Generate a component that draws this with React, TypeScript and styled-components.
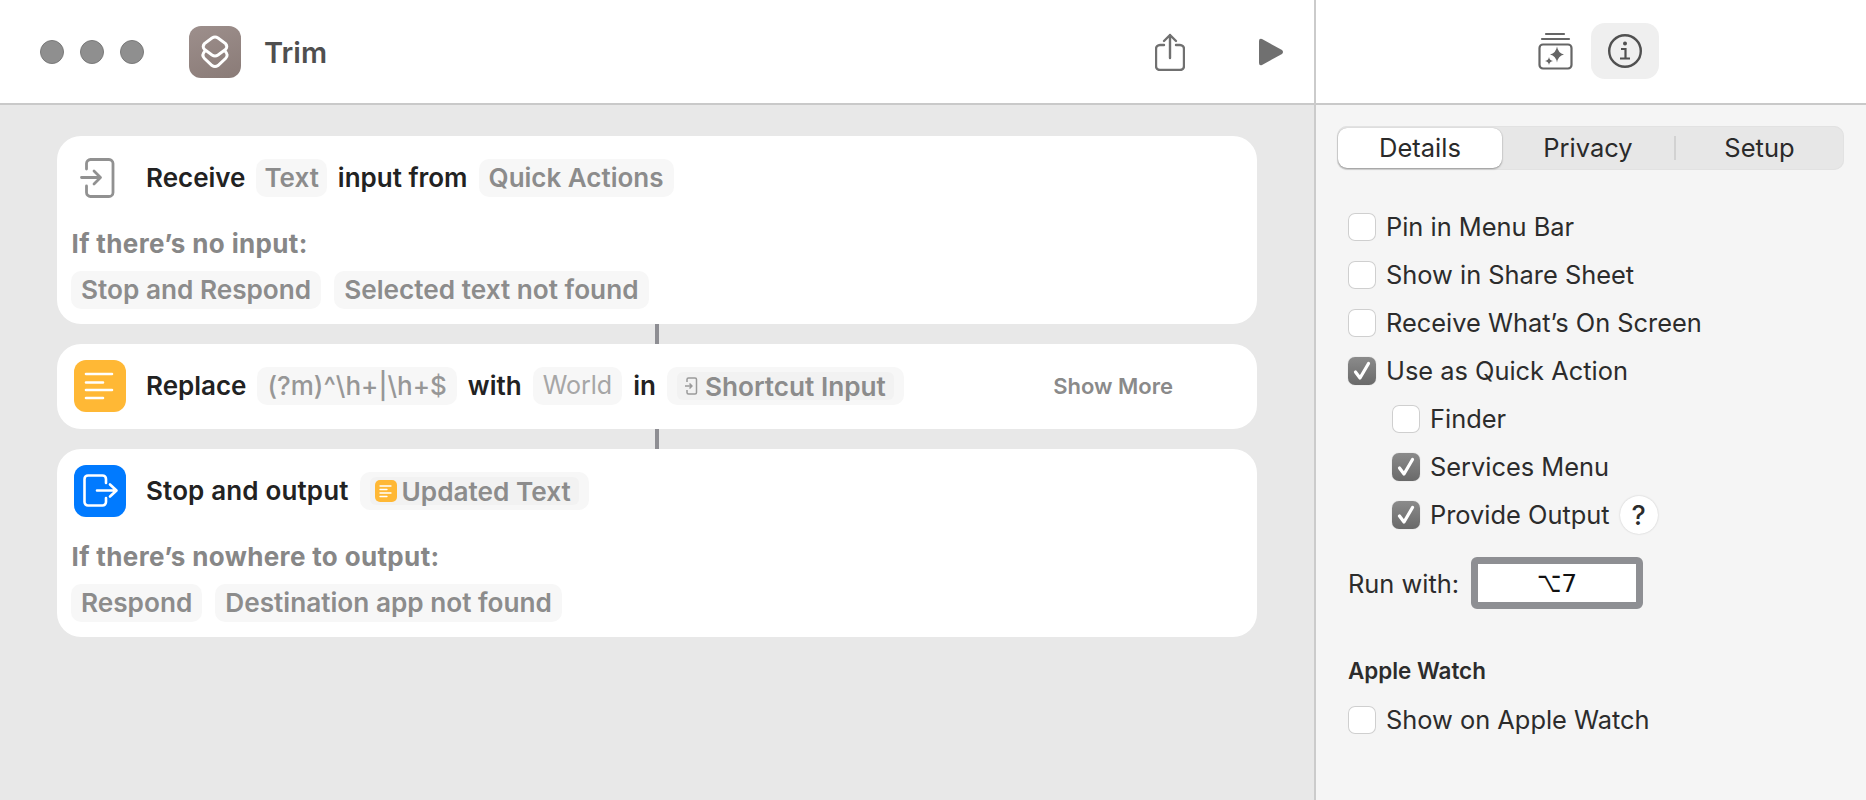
import React from 'react'
import styled, { createGlobalStyle } from 'styled-components'

const GlobalStyle = createGlobalStyle`
  html, body {
    margin: 0;
    padding: 0;
    background: #f5f5f5;
  }
  * {
    box-sizing: border-box;
  }
`

const Window = styled.div`
  display: flex;
  width: 1866px;
  height: 800px;
  overflow: hidden;
  font-family: Inter, 'Liberation Sans', sans-serif;
`

const Editor = styled.div`
  display: flex;
  flex-direction: column;
  width: 1316px;
  flex: none;
  background: #e8e8e8;
  border-right: 2px solid #cbcbcb;
`

const Sidebar = styled.div`
  display: flex;
  flex-direction: column;
  flex: 1;
  background: #f5f5f5;
`

const Toolbar = styled.header`
  display: flex;
  align-items: center;
  height: 105px;
  flex: none;
  background: #fff;
  border-bottom: 2px solid #c9c9c9;
`

const EditorToolbar = styled(Toolbar)`
  padding-left: 40px;
  padding-right: 30px;
`

const SidebarToolbar = styled(Toolbar)`
  justify-content: flex-start;
  padding-left: 222px;
  padding-bottom: 2px;
`

const Lights = styled.div`
  display: flex;
  gap: 16px;
  margin-right: 45px;
`

const Light = styled.span`
  width: 24px;
  height: 24px;
  border-radius: 50%;
  background: #8f8f8f;
  border: 1px solid #7a7a7a;
`

const AppIcon = styled.div`
  display: flex;
  width: 52px;
  height: 52px;
  border-radius: 12px;
  background: linear-gradient(160deg, #9d8f8c, #8a7b77);
`

const Title = styled.h1`
  margin: 2px 0 0 23px;
  font-size: 29px;
  font-weight: 600;
  color: #4f4f4f;
`

const ToolbarActions = styled.div`
  display: flex;
  align-items: center;
  gap: 73px;
  margin-left: auto;
`

const ToolIcon = styled.svg`
  display: block;
  flex: none;
`

const InfoButton = styled.div`
  display: flex;
  align-items: center;
  justify-content: center;
  width: 68px;
  height: 56px;
  margin-left: 17px;
  border-radius: 14px;
  background: #efefef;
`

const Flow = styled.main`
  display: flex;
  flex-direction: column;
  padding: 31px 0 0 57px;
`

const Card = styled.section<{ $compact?: boolean }>`
  width: 1200px;
  padding: 16px 0 ${(p) => (p.$compact ? '17px' : '15px')};
  background: #fff;
  border-radius: 24px;
`

const Connector = styled.div<{ $height: number }>`
  width: 4px;
  height: ${(p) => p.$height}px;
  margin-left: 598px;
  background: #8e8e93;
`

const ActionRow = styled.div`
  display: flex;
  align-items: center;
  gap: 11px;
  height: 52px;
  padding-left: 17px;
`

const IconSlot = styled.div`
  width: 52px;
  flex: none;
  margin-right: 9px;
  padding-left: 6px;
`

const ActionIcon = styled.div<{ $color: string }>`
  width: 52px;
  height: 52px;
  flex: none;
  margin-right: 9px;
  border-radius: 12px;
  background: ${(p) => p.$color};
`

const Word = styled.span<{ $wide?: boolean }>`
  padding-bottom: 2px;
  font-size: 26px;
  font-weight: 600;
  letter-spacing: ${(p) => (p.$wide ? '0.15px' : '0')};
  color: #222;
  white-space: nowrap;
`

const Chip = styled.span<{ $tone?: 'value' | 'regex' | 'hint' }>`
  display: inline-flex;
  align-items: center;
  height: 38px;
  padding: 0 10px 2px;
  border-radius: 10px;
  background: #f7f7f7;
  font-size: ${(p) => (p.$tone === 'hint' ? '25px' : '26px')};
  white-space: nowrap;
  font-weight: ${(p) => (p.$tone === 'hint' ? 400 : p.$tone === 'regex' ? 500 : 600)};
  color: ${(p) => (p.$tone === 'hint' ? '#a6a6a6' : p.$tone === 'regex' ? '#979797' : '#8c8c8c')};
`

const ShortChip = styled(Chip)`
  padding: 0 8px 2px;
`

const VariableChip = styled(Chip)`
  padding: 0 10px;
`

const VariableTag = styled.span`
  display: inline-flex;
  align-items: center;
  gap: 5px;
  height: 28px;
  padding: 0 8px 0 5px;
  border-radius: 6px;
  background: #f2f2f2;
  font-size: 26.2px;
`

const TagIcon = styled.span<{ $color: string }>`
  display: flex;
  width: 22px;
  height: 22px;
  border-radius: 5px;
  background: ${(p) => p.$color};
`

const ShowMore = styled.span`
  margin-left: auto;
  margin-right: 84px;
  font-size: 22px;
  font-weight: 600;
  color: #8a8a8a;
`

const Fallback = styled.div`
  padding: 25px 14px 0;
`

const FallbackLabel = styled.div`
  height: 30px;
  margin-left: 0.5px;
  font-size: 26px;
  letter-spacing: 0.35px;
  line-height: 30px;
  font-weight: 700;
  color: #878787;
`

const FallbackChips = styled.div`
  display: flex;
  gap: 13px;
  margin-top: 12px;
`

const FallbackChip = styled(Chip)`
  font-size: 26.2px;
`

const Segments = styled.div`
  display: flex;
  align-items: center;
  height: 44px;
  margin: 21px 22px 0 21px;
  padding: 0 1px;
  border-radius: 10px;
  background: #e7e7e7;
  box-shadow: inset 0 0 0 1px #e2e2e2;
`

const Segment = styled.div<{ $active?: boolean; $width: number }>`
  display: flex;
  align-items: center;
  justify-content: center;
  width: ${(p) => p.$width}px;
  height: 40px;
  padding-bottom: 2px;
  border-radius: 9px;
  font-size: 25.5px;
  color: #2a2a2a;
  background: ${(p) => (p.$active ? '#fff' : 'transparent')};
  box-shadow: ${(p) => (p.$active ? '0 1px 2px rgba(0,0,0,.35), 0 0 1px rgba(0,0,0,.2)' : 'none')};
`

const SegmentDivider = styled.span`
  width: 2px;
  height: 24px;
  background: #d2d2d2;
`

const Options = styled.div`
  display: flex;
  flex-direction: column;
  margin-top: 33px;
  padding-left: 32px;
`

const OptionRow = styled.label<{ $nested?: boolean }>`
  display: flex;
  align-items: center;
  gap: 10px;
  height: 48px;
  padding-left: ${(p) => (p.$nested ? '44px' : '0')};
  font-size: 25.4px;
  color: #2c2c2c;
`

const OptionLabel = styled.span`
  padding-bottom: 2px;
`

const Check = styled.span<{ $on?: boolean }>`
  display: flex;
  align-items: center;
  justify-content: center;
  width: 28px;
  height: 28px;
  flex: none;
  border-radius: 7px;
  background: ${(p) => (p.$on ? 'linear-gradient(#8b8b8b, #696969)' : '#fff')};
  box-shadow: ${(p) => (p.$on ? '0 0 1px rgba(0,0,0,.3)' : 'inset 0 0 0 1px #cfcfcf')};
`

const HelpButton = styled.span`
  display: flex;
  align-items: center;
  justify-content: center;
  width: 38px;
  height: 38px;
  margin-left: 0;
  border-radius: 50%;
  background: #fff;
  box-shadow: 0 0 2px rgba(0, 0, 0, 0.2);
  font-size: 27px;
  font-weight: 500;
  color: #2c2c2c;
`

const RunRow = styled.div`
  display: flex;
  align-items: center;
  gap: 12px;
  margin-top: 18px;
  font-size: 25.4px;
  color: #2c2c2c;
`

const HotkeyField = styled.div`
  display: flex;
  align-items: center;
  justify-content: center;
  width: 172px;
  height: 52px;
  border: 7px solid #8e8f93;
  border-radius: 6px;
  background: #fff;
  font-size: 25px;
  color: #111;
  font-family: 'DejaVu Sans', Inter, sans-serif;
`

const OptionKey = styled.span`
  display: inline-block;
  font-size: 21px;
  transform: scaleY(1.35);
`

const SectionTitle = styled.h2`
  margin: 49px 0 0;
  font-size: 22.4px;
  line-height: 26px;
  font-weight: 600;
  color: #2c2c2c;
`

const WatchOption = styled(OptionRow)`
  margin-top: 12px;
`

const ShortcutsGlyph = () => (
  <ToolIcon width="52" height="52" viewBox="0 0 52 52" fill="none" stroke="#fff" strokeWidth="3">
    <path d="M23 12Q26 10 29 12L36.500 17.500Q39 20.500 36.500 23.500L29 29Q26 31 23 29L15.500 23.500Q13 20.500 15.500 17.500Z" />
    <path d="M16 25Q12 29 15.500 32.500L23 39.500Q26 41.500 29 39.500L36.500 32.500Q40 29 36 25" />
  </ToolIcon>
)

const ShareIcon = () => (
  <ToolIcon width="30" height="38" viewBox="0 0 30 38" fill="none" stroke="#707070" strokeWidth="2.4" strokeLinecap="round" strokeLinejoin="round">
    <path d="M9 12H5a4 4 0 0 0-4 4v17a4 4 0 0 0 4 4h20a4 4 0 0 0 4-4V16a4 4 0 0 0-4-4h-4" />
    <path d="M15 25V2M9 8l6-6 6 6" />
  </ToolIcon>
)

const PlayIcon = () => (
  <ToolIcon width="26" height="28" viewBox="0 0 26 28">
    <path d="M1 3Q1 0 4 1L24 12Q26 14 24 16L4 27Q1 28 1 25Z" fill="#707070" />
  </ToolIcon>
)

const LibraryIcon = () => (
  <ToolIcon width="36" height="38" viewBox="0 0 36 38" fill="none" stroke="#666" strokeWidth="2.2" strokeLinecap="round">
    <path d="M8 2H26M4 7H31" />
    <rect x="1.500" y="12.500" width="32" height="24" rx="3.500" />
    <path d="M19 14.500Q20 21 26 22.500Q20 24 19 30.500Q18 24 12 22.500Q18 21 19 14.500Z" fill="#666" stroke="none" />
    <path d="M11 25Q11.500 28.500 15 29Q11.500 29.500 11 33Q10.500 29.500 7 29Q10.500 28.500 11 25Z" fill="#666" stroke="none" />
  </ToolIcon>
)

const InfoIcon = () => (
  <ToolIcon width="36" height="36" viewBox="0 0 36 36" fill="none" stroke="#505050" strokeWidth="2.4">
    <circle cx="18" cy="18" r="15.800" />
    <circle cx="18" cy="10.500" r="2" fill="#505050" stroke="none" />
    <path d="M14 16H18.500V25M13 25.500H23" strokeWidth="2.2" />
  </ToolIcon>
)

const ReceiveIcon = () => (
  <ToolIcon width="36" height="40" viewBox="0 0 36 40" fill="none" stroke="#919191" strokeWidth="2.8" strokeLinecap="round" strokeLinejoin="round">
    <path d="M6.500 11V5.500a4 4 0 0 1 4-4H29a4 4 0 0 1 4 4v29a4 4 0 0 1-4 4H10.500a4 4 0 0 1-4-4V28" />
    <path d="M1.500 19.500H20M14 13l6.500 6.500L14 26" />
  </ToolIcon>
)

const ReplaceGlyph = () => (
  <ToolIcon width="52" height="52" viewBox="0 0 52 52" stroke="#fff" strokeWidth="2.600" strokeLinecap="round">
    <path d="M12 14H38M12 22.500H29M12 30H38M12 38H29" />
  </ToolIcon>
)

const StopGlyph = () => (
  <ToolIcon width="52" height="52" viewBox="0 0 52 52" fill="none" stroke="#fff" strokeWidth="2.600" strokeLinecap="round" strokeLinejoin="round">
    <path d="M32 18v-4a3.500 3.500 0 0 0-3.500-3.500H14a3.500 3.500 0 0 0-3.500 3.500v23a3.500 3.500 0 0 0 3.500 3.500h14.500a3.500 3.500 0 0 0 3.500-3.500v-4" />
    <path d="M23 25.500H42M36 19.500l6.500 6-6.500 6" />
  </ToolIcon>
)

const MiniInputIcon = () => (
  <ToolIcon width="18" height="20" viewBox="0 0 18 20" fill="none" stroke="#9a9a9a" strokeWidth="1.500" strokeLinejoin="round">
    <path d="M5 6V3.500a1.500 1.500 0 0 1 1.500-1.500H13a1.500 1.500 0 0 1 1.500 1.500v13a1.500 1.500 0 0 1-1.500 1.500H6.500A1.500 1.500 0 0 1 5 16.500V14" />
    <path d="M3 10H10M7.500 7.500L10 10l-2.500 2.500" />
  </ToolIcon>
)

const MiniReplaceGlyph = () => (
  <ToolIcon width="22" height="22" viewBox="0 0 22 22" stroke="#fff" strokeWidth="1.300" strokeLinecap="round">
    <path d="M5 6H16M5 9.500H12M5 13H16M5 16.500H12" />
  </ToolIcon>
)

const CheckMark = () => (
  <ToolIcon width="20" height="20" viewBox="0 0 20 20" fill="none" stroke="#fff" strokeWidth="3.200" strokeLinecap="round" strokeLinejoin="round">
    <path d="M3.500 11l4.500 6L16.500 2.500" />
  </ToolIcon>
)

const Option = ({ label, on, nested, children }: { label: string; on?: boolean; nested?: boolean; children?: React.ReactNode }) => (
  <OptionRow $nested={nested}>
    <Check $on={on}>{on && <CheckMark />}</Check>
    <OptionLabel>{label}</OptionLabel>
    {children}
  </OptionRow>
)

export default function App() {
  return (
    <Window>
      <GlobalStyle />
      <Editor>
        <EditorToolbar>
          <Lights>
            <Light />
            <Light />
            <Light />
          </Lights>
          <AppIcon>
            <ShortcutsGlyph />
          </AppIcon>
          <Title>Trim</Title>
          <ToolbarActions>
            <ShareIcon />
            <PlayIcon />
          </ToolbarActions>
        </EditorToolbar>
        <Flow>
          <Card>
            <ActionRow>
              <IconSlot>
                <ReceiveIcon />
              </IconSlot>
              <Word>Receive</Word>
              <ShortChip>Text</ShortChip>
              <Word>input from</Word>
              <Chip>Quick Actions</Chip>
            </ActionRow>
            <Fallback>
              <FallbackLabel>If there’s no input:</FallbackLabel>
              <FallbackChips>
                <FallbackChip>Stop and Respond</FallbackChip>
                <FallbackChip>Selected text not found</FallbackChip>
              </FallbackChips>
            </Fallback>
          </Card>
          <Connector $height={20} />
          <Card $compact>
            <ActionRow>
              <ActionIcon $color="#ffb835">
                <ReplaceGlyph />
              </ActionIcon>
              <Word>Replace</Word>
              <Chip $tone="regex">(?m)^\h+|\h+$</Chip>
              <Word>with</Word>
              <Chip $tone="hint">World</Chip>
              <Word>in</Word>
              <VariableChip>
                <VariableTag>
                  <MiniInputIcon />
                  Shortcut Input
                </VariableTag>
              </VariableChip>
              <ShowMore>Show More</ShowMore>
            </ActionRow>
          </Card>
          <Connector $height={20} />
          <Card>
            <ActionRow>
              <ActionIcon $color="#007aff">
                <StopGlyph />
              </ActionIcon>
              <Word $wide>Stop and output</Word>
              <VariableChip>
                <VariableTag>
                  <TagIcon $color="#ffb835">
                    <MiniReplaceGlyph />
                  </TagIcon>
                  Updated Text
                </VariableTag>
              </VariableChip>
            </ActionRow>
            <Fallback>
              <FallbackLabel>If there’s nowhere to output:</FallbackLabel>
              <FallbackChips>
                <FallbackChip>Respond</FallbackChip>
                <FallbackChip>Destination app not found</FallbackChip>
              </FallbackChips>
            </Fallback>
          </Card>
        </Flow>
      </Editor>
      <Sidebar>
        <SidebarToolbar>
          <LibraryIcon />
          <InfoButton>
            <InfoIcon />
          </InfoButton>
        </SidebarToolbar>
        <Segments>
          <Segment $active $width={164}>Details</Segment>
          <Segment $width={172}>Privacy</Segment>
          <SegmentDivider />
          <Segment $width={167}>Setup</Segment>
        </Segments>
        <Options>
          <Option label="Pin in Menu Bar" />
          <Option label="Show in Share Sheet" />
          <Option label="Receive What’s On Screen" />
          <Option label="Use as Quick Action" on />
          <Option label="Finder" nested />
          <Option label="Services Menu" on nested />
          <Option label="Provide Output" on nested>
            <HelpButton>?</HelpButton>
          </Option>
          <RunRow>
            Run with:
            <HotkeyField>
              <OptionKey>⌥</OptionKey>7
            </HotkeyField>
          </RunRow>
          <SectionTitle>Apple Watch</SectionTitle>
          <WatchOption>
            <Check />
            <OptionLabel>Show on Apple Watch</OptionLabel>
          </WatchOption>
        </Options>
      </Sidebar>
    </Window>
  )
}
